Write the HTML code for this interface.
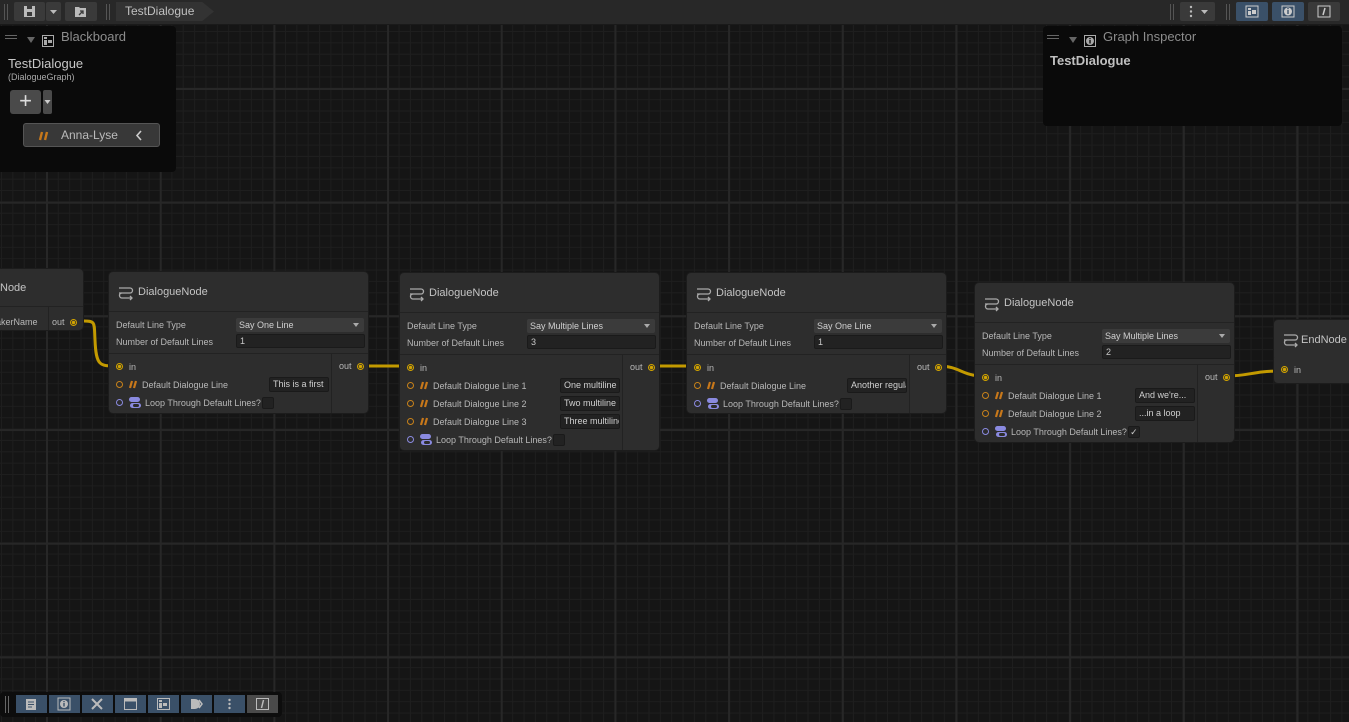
<!DOCTYPE html>
<html><head><meta charset="utf-8"><style>
*{box-sizing:border-box;margin:0;padding:0}
body{width:1349px;height:722px;overflow:hidden;background:#161616;font-family:"Liberation Sans",sans-serif;position:relative;color:#c4c4c4}
#canvas{position:absolute;left:0;top:25px;width:1349px;height:697px;
background-color:#151515;
background-image:
linear-gradient(to right,#272727 2px,transparent 2px),
linear-gradient(to bottom,#272727 2px,transparent 2px),
linear-gradient(to right,#1e1e1e 1px,transparent 1px),
linear-gradient(to bottom,#1e1e1e 1px,transparent 1px);
background-size:113.7px 113.7px,113.7px 113.7px,11.37px 11.37px,11.37px 11.37px;
background-position:46px 63px,46px 63px,1px 6px,1px 6px}
#top{position:absolute;left:0;top:0;width:1349px;height:25px;background:#282828;border-bottom:1px solid #1a1a1a}
.tb{position:absolute;top:2px;height:19px;background:#3a3a3a;border-radius:2px}
.grip{position:absolute;width:1px;background:#555}
.node{position:absolute;background:#2d2d2d;border:1px solid #1c1c1c;border-radius:5px;font-size:9px;color:#b8b8b8}
.node .hd{position:absolute;left:0;top:0;right:0;height:40px;border-bottom:1px solid #222}
.node .ti{position:absolute;left:29px;top:14px;font-size:11px;color:#c4c4c4}
.node .ic{position:absolute;left:8px;top:12px}
.lbl{position:absolute;left:7px;white-space:nowrap}
.dd{position:absolute;left:127px;width:128px;height:14px;background:#3b3b3b;border-radius:2px;color:#d0d0d0;padding-left:3px;line-height:14px}
.dd:after{content:"";position:absolute;right:5px;top:5px;border:3px solid transparent;border-top:4px solid #aaa}
.nf{position:absolute;left:127px;width:129px;height:14px;background:#222;border:1px solid #1a1a1a;border-radius:2px;color:#c8c8c8;padding-left:3px;line-height:12px}
.sep{position:absolute;left:0;right:0;top:81px;border-top:1px solid #222}
.oc{position:absolute;right:0;top:82px;bottom:0;width:37px;border-left:1px solid #222}
.row{position:absolute;left:7px;height:14px;line-height:14px;white-space:nowrap}
.pc{display:inline-block;width:7px;height:7px;border-radius:50%;border:1px solid #c8821a;vertical-align:middle;margin-right:6px;margin-top:-2px}
.pc.p{border-color:#8a8ae0}
.pc.y{border-color:#d2a400;background:radial-gradient(#d2a400 1.5px,transparent 2px)}
.tf{position:absolute;left:160px;width:60px;height:15px;background:#222;border:1px solid #1a1a1a;border-radius:2px;color:#d0d0d0;padding-left:3px;line-height:13px;overflow:hidden;white-space:nowrap}
.cb{display:inline-block;width:12px;height:12px;background:#222;border:1px solid #1a1a1a;border-radius:2px;vertical-align:middle;margin-left:1px;margin-top:-2px;font-size:9px;line-height:10px;text-align:center;color:#ccc}
.out{position:absolute;right:4px;top:89px;white-space:nowrap}
.q{display:inline-block;vertical-align:middle;margin-right:4px;margin-top:-2px}
.panel{position:absolute;background:#0a0a0a;border-radius:4px}
.bb{position:absolute;top:3px;width:31px;height:18px;background:#3a5068}
</style></head><body>
<div id="canvas"></div>
<div id="top">
<div class="grip" style="left:4px;top:4px;height:16px"></div><div class="grip" style="left:7px;top:4px;height:16px"></div>
<div class="tb" style="left:14px;width:31px"><svg width="31" height="19"><rect x="10" y="4" width="11" height="11" fill="#bbb"/><rect x="13" y="4" width="5" height="3" fill="#3a3a3a"/><rect x="13" y="10" width="5" height="4" fill="#3a3a3a"/></svg></div>
<div class="tb" style="left:46px;width:15px"><svg width="15" height="19"><path d="M4 8h7l-3.5 4z" fill="#bbb"/></svg></div>
<div class="tb" style="left:65px;width:32px"><svg width="32" height="19"><path d="M10 5h4l1 1h6v9H10z" fill="#bbb"/><path d="M14 13l4-4M15 9h3v3" stroke="#3a3a3a" stroke-width="1.3" fill="none"/></svg></div>
<div class="grip" style="left:106px;top:4px;height:16px"></div><div class="grip" style="left:109px;top:4px;height:16px"></div>
<div style="position:absolute;left:116px;top:2px;width:98px;height:19px;background:#333;clip-path:polygon(0 0,88% 0,100% 50%,88% 100%,0 100%)"></div>
<div style="position:absolute;left:125px;top:4px;font-size:12px;color:#c0c0c0">TestDialogue</div>
<div class="grip" style="left:1170px;top:4px;height:16px"></div><div class="grip" style="left:1173px;top:4px;height:16px"></div>
<div class="tb" style="left:1180px;width:35px"><svg width="35" height="19"><circle cx="11" cy="5" r="1.2" fill="#bbb"/><circle cx="11" cy="9.5" r="1.2" fill="#bbb"/><circle cx="11" cy="14" r="1.2" fill="#bbb"/><path d="M21 8h7l-3.5 4z" fill="#bbb"/></svg></div>
<div class="grip" style="left:1226px;top:4px;height:16px"></div><div class="grip" style="left:1229px;top:4px;height:16px"></div>
<div class="tb" style="left:1236px;width:32px;background:#3a5068"><svg width="32" height="19"><rect x="10" y="4" width="12" height="11" fill="none" stroke="#ccc"/><rect x="12" y="6" width="3" height="2" fill="#ccc"/><rect x="12" y="9" width="3" height="4" fill="#ccc"/><rect x="16" y="8" width="4" height="4" fill="#ccc"/></svg></div>
<div class="tb" style="left:1272px;width:32px;background:#3a5068"><svg width="32" height="19"><rect x="10" y="4" width="12" height="11" fill="none" stroke="#ccc"/><circle cx="16" cy="9.5" r="4" fill="#ccc"/><rect x="15.3" y="8" width="1.4" height="4" fill="#3a5068"/><rect x="15.3" y="6" width="1.4" height="1.2" fill="#3a5068"/></svg></div>
<div class="tb" style="left:1308px;width:32px"><svg width="32" height="19"><rect x="10" y="4" width="12" height="11" fill="none" stroke="#ccc"/><path d="M17 6l-2 7" stroke="#ccc" stroke-width="1.5"/></svg></div>
</div>

<svg style="position:absolute;left:0;top:0" width="1349" height="722">
<g fill="none" stroke="#c39a00" stroke-width="3">
<path d="M84 321 C96 321 94 323 95 340 C96 366 100 366 116 366"/>
<path d="M364 366 L408 366"/>
<path d="M651 366 L694 366"/>
<path d="M938 366 C960 366 962 376 983 376"/>
<path d="M1226 376 C1250 376 1252 371 1281 371"/>
</g></svg>

<div class="node" style="left:-10px;top:268px;width:94px;height:63px">
<div class="hd" style="height:38px"></div>
<div class="ti" style="left:9px;top:13px">Node</div>
<div style="position:absolute;left:57px;top:38px;bottom:0;border-left:1px solid #222"></div>
<div class="row" style="left:5px;top:46px">akerName</div>
<div class="row" style="left:61px;top:46px">out <span class="pc y" style="margin:0 0 0 3px"></span></div>
</div>

<svg width="0" height="0" style="position:absolute"><defs>
<g id="ni"><path d="M4 4h9a2.5 2.5 0 010 5H5a2.5 2.5 0 000 5h10M13 12l2 2-2 2" stroke="#aaa" stroke-width="1.3" fill="none"/><path d="M2 4h2M2 9h3" stroke="#aaa" stroke-width="1.3"/></g>
<g id="qi"><path d="M3 1L1 8M7 1L5 8" stroke="#c8781a" stroke-width="2.2" fill="none"/></g>
<g id="li"><rect x="0" y="0" width="11" height="5" rx="2.5" fill="#8a8ae0"/><rect x="1" y="6" width="11" height="5" rx="2.5" fill="#8a8ae0"/><rect x="4" y="7" width="6" height="3" rx="1.5" fill="#2d2d2d"/></g>
</defs></svg>

<div class="node" style="left:108px;top:271px;width:261px;height:143px">
<div class="hd"></div><svg class="ic" width="18" height="18"><use href="#ni"/></svg><div class="ti">DialogueNode</div>
<div class="lbl" style="top:48px">Default Line Type</div><div class="dd" style="top:46px">Say One Line</div>
<div class="lbl" style="top:65px">Number of Default Lines</div><div class="nf" style="top:62px">1</div>
<div class="sep"></div><div class="oc"></div>
<div class="row" style="top:88px"><span class="pc y"></span>in</div>
<div class="row" style="top:106px"><span class="pc"></span><svg class="q" width="9" height="9"><use href="#qi"/></svg>Default Dialogue Line</div><div class="tf" style="top:105px">This is a first</div>
<div class="row" style="top:124px"><span class="pc p"></span><svg class="q" width="12" height="11"><use href="#li"/></svg>Loop Through Default Lines?<span class="cb"></span></div>
<div class="out">out <span class="pc y" style="margin:0 0 0 3px"></span></div>
</div>

<div class="node" style="left:399px;top:272px;width:261px;height:179px">
<div class="hd"></div><svg class="ic" width="18" height="18"><use href="#ni"/></svg><div class="ti">DialogueNode</div>
<div class="lbl" style="top:48px">Default Line Type</div><div class="dd" style="top:46px">Say Multiple Lines</div>
<div class="lbl" style="top:65px">Number of Default Lines</div><div class="nf" style="top:62px">3</div>
<div class="sep"></div><div class="oc"></div>
<div class="row" style="top:88px"><span class="pc y"></span>in</div>
<div class="row" style="top:106px"><span class="pc"></span><svg class="q" width="9" height="9"><use href="#qi"/></svg>Default Dialogue Line 1</div><div class="tf" style="top:105px">One multiline</div>
<div class="row" style="top:124px"><span class="pc"></span><svg class="q" width="9" height="9"><use href="#qi"/></svg>Default Dialogue Line 2</div><div class="tf" style="top:123px">Two multiline</div>
<div class="row" style="top:142px"><span class="pc"></span><svg class="q" width="9" height="9"><use href="#qi"/></svg>Default Dialogue Line 3</div><div class="tf" style="top:141px">Three multiline</div>
<div class="row" style="top:160px"><span class="pc p"></span><svg class="q" width="12" height="11"><use href="#li"/></svg>Loop Through Default Lines?<span class="cb"></span></div>
<div class="out">out <span class="pc y" style="margin:0 0 0 3px"></span></div>
</div>

<div class="node" style="left:686px;top:272px;width:261px;height:142px">
<div class="hd"></div><svg class="ic" width="18" height="18"><use href="#ni"/></svg><div class="ti">DialogueNode</div>
<div class="lbl" style="top:48px">Default Line Type</div><div class="dd" style="top:46px">Say One Line</div>
<div class="lbl" style="top:65px">Number of Default Lines</div><div class="nf" style="top:62px">1</div>
<div class="sep"></div><div class="oc"></div>
<div class="row" style="top:88px"><span class="pc y"></span>in</div>
<div class="row" style="top:106px"><span class="pc"></span><svg class="q" width="9" height="9"><use href="#qi"/></svg>Default Dialogue Line</div><div class="tf" style="top:105px">Another regular</div>
<div class="row" style="top:124px"><span class="pc p"></span><svg class="q" width="12" height="11"><use href="#li"/></svg>Loop Through Default Lines?<span class="cb"></span></div>
<div class="out">out <span class="pc y" style="margin:0 0 0 3px"></span></div>
</div>

<div class="node" style="left:974px;top:282px;width:261px;height:161px">
<div class="hd"></div><svg class="ic" width="18" height="18"><use href="#ni"/></svg><div class="ti">DialogueNode</div>
<div class="lbl" style="top:48px">Default Line Type</div><div class="dd" style="top:46px">Say Multiple Lines</div>
<div class="lbl" style="top:65px">Number of Default Lines</div><div class="nf" style="top:62px">2</div>
<div class="sep"></div><div class="oc"></div>
<div class="row" style="top:88px"><span class="pc y"></span>in</div>
<div class="row" style="top:106px"><span class="pc"></span><svg class="q" width="9" height="9"><use href="#qi"/></svg>Default Dialogue Line 1</div><div class="tf" style="top:105px">And we're...</div>
<div class="row" style="top:124px"><span class="pc"></span><svg class="q" width="9" height="9"><use href="#qi"/></svg>Default Dialogue Line 2</div><div class="tf" style="top:123px">...in a loop</div>
<div class="row" style="top:142px"><span class="pc p"></span><svg class="q" width="12" height="11"><use href="#li"/></svg>Loop Through Default Lines?<span class="cb">✓</span></div>
<div class="out">out <span class="pc y" style="margin:0 0 0 3px"></span></div>
</div>

<div class="node" style="left:1273px;top:319px;width:90px;height:43px">
<div class="hd" style="height:40px;border:none"></div>
<div style="position:absolute;left:0;right:0;top:39px;border-top:1px solid #222"></div>
<svg class="ic" style="left:8px;top:11px" width="18" height="18"><use href="#ni"/></svg><div class="ti" style="left:27px;top:14px">EndNode</div>
</div>
<div class="node" style="left:1273px;top:358px;width:90px;height:26px;border-top:none;border-radius:0 0 5px 5px">
<div class="row" style="top:5px"><span class="pc y"></span>in</div></div>

<div class="panel" style="left:-5px;top:26px;width:181px;height:146px">
<div style="position:absolute;left:10px;top:9px;width:12px;border-top:1px solid #666;height:4px;border-bottom:1px solid #666"></div>
<svg style="position:absolute;left:32px;top:8px" width="30" height="14"><path d="M0 3h8l-4 6z" fill="#666"/><rect x="15.5" y="1.5" width="11" height="11" fill="none" stroke="#aaa"/><rect x="17" y="3" width="3" height="2" fill="#aaa"/><rect x="17" y="6" width="3" height="5" fill="#aaa"/><rect x="21" y="6" width="4" height="3" fill="#aaa"/></svg>
<div style="position:absolute;left:66px;top:3px;font-size:13px;color:#8c8c8c">Blackboard</div>
<div style="position:absolute;left:13px;top:30px;font-size:13px;color:#c8c8c8">TestDialogue</div>
<div style="position:absolute;left:13px;top:46px;font-size:9px;color:#aaa">(DialogueGraph)</div>
<div style="position:absolute;left:15px;top:64px;width:31px;height:24px;background:#4a4a4a;border-radius:3px;color:#ddd;font-size:22px;line-height:22px;text-align:center">+</div>
<div style="position:absolute;left:48px;top:64px;width:9px;height:24px;background:#4a4a4a;border-radius:2px"><svg width="9" height="24"><path d="M1.5 10h6l-3 4z" fill="#ccc"/></svg></div>
<div style="position:absolute;left:28px;top:97px;width:137px;height:24px;background:#383838;border:1px solid #555;border-radius:3px">
<svg style="position:absolute;left:14px;top:7px" width="12" height="10"><path d="M4 1L2 9M9 1L7 9" stroke="#c8781a" stroke-width="2.4"/></svg>
<div style="position:absolute;left:37px;top:4px;font-size:12px;color:#bbb">Anna-Lyse</div>
<svg style="position:absolute;left:110px;top:5px" width="10" height="13"><path d="M7 2L3 6.5 7 11" stroke="#ccc" stroke-width="1.6" fill="none"/></svg>
</div>
</div>

<div class="panel" style="left:1043px;top:26px;width:299px;height:100px">
<div style="position:absolute;left:4px;top:9px;width:12px;border-top:1px solid #666;height:4px;border-bottom:1px solid #666"></div>
<svg style="position:absolute;left:26px;top:8px" width="30" height="14"><path d="M0 3h8l-4 6z" fill="#666"/><rect x="15.5" y="1.5" width="11" height="11" fill="none" stroke="#aaa"/><circle cx="21" cy="7" r="4" fill="#aaa"/><rect x="20.3" y="6" width="1.4" height="3.5" fill="#0a0a0a"/><rect x="20.3" y="4" width="1.4" height="1.2" fill="#0a0a0a"/></svg>
<div style="position:absolute;left:60px;top:3px;font-size:13px;color:#8c8c8c">Graph Inspector</div>
<div style="position:absolute;left:7px;top:27px;font-size:13px;font-weight:bold;color:#c0c0c0">TestDialogue</div>
</div>

<div class="panel" style="left:0;top:692px;width:282px;height:25px;background:#0d0d0d">
<div class="grip" style="left:5px;top:4px;height:17px;background:#666"></div><div class="grip" style="left:8px;top:4px;height:17px;background:#666"></div>
<div class="bb" style="left:16px"><svg width="31" height="18"><rect x="10" y="4" width="10" height="11" fill="#bbb"/><path d="M12 7h6M12 9.5h6M12 12h4" stroke="#3a5068"/></svg></div>
<div class="bb" style="left:49px"><svg width="31" height="18"><rect x="9" y="3" width="12" height="12" fill="none" stroke="#bbb"/><circle cx="15" cy="9" r="4" fill="#bbb"/><rect x="14.3" y="8" width="1.4" height="3.5" fill="#3a5068"/><rect x="14.3" y="6" width="1.4" height="1.2" fill="#3a5068"/></svg></div>
<div class="bb" style="left:82px"><svg width="31" height="18"><path d="M10 4l10 10M20 4l-10 10" stroke="#bbb" stroke-width="2"/></svg></div>
<div class="bb" style="left:115px"><svg width="31" height="18"><rect x="9.5" y="3.5" width="12" height="11" fill="none" stroke="#bbb"/><rect x="9.5" y="3.5" width="12" height="3" fill="#bbb"/></svg></div>
<div class="bb" style="left:148px"><svg width="31" height="18"><rect x="9.5" y="3.5" width="12" height="11" fill="none" stroke="#bbb"/><rect x="11" y="5" width="3" height="2" fill="#bbb"/><rect x="11" y="8" width="3" height="5" fill="#bbb"/><rect x="15" y="8" width="4" height="3" fill="#bbb"/></svg></div>
<div class="bb" style="left:181px"><svg width="31" height="18"><path d="M10 4h4a5 5 0 010 10h-4z" fill="#bbb"/><path d="M18 5l3 4-3 4" stroke="#bbb" stroke-width="1.5" fill="none"/></svg></div>
<div class="bb" style="left:214px"><svg width="31" height="18"><circle cx="15.5" cy="5" r="1.2" fill="#bbb"/><circle cx="15.5" cy="9" r="1.2" fill="#bbb"/><circle cx="15.5" cy="13" r="1.2" fill="#bbb"/></svg></div>
<div class="bb" style="left:247px;background:#4a4a4a"><svg width="31" height="18"><rect x="9.5" y="3.5" width="12" height="11" fill="none" stroke="#bbb"/><path d="M16.5 5l-2 8" stroke="#bbb" stroke-width="1.5"/></svg></div>
</div>
</body></html>
